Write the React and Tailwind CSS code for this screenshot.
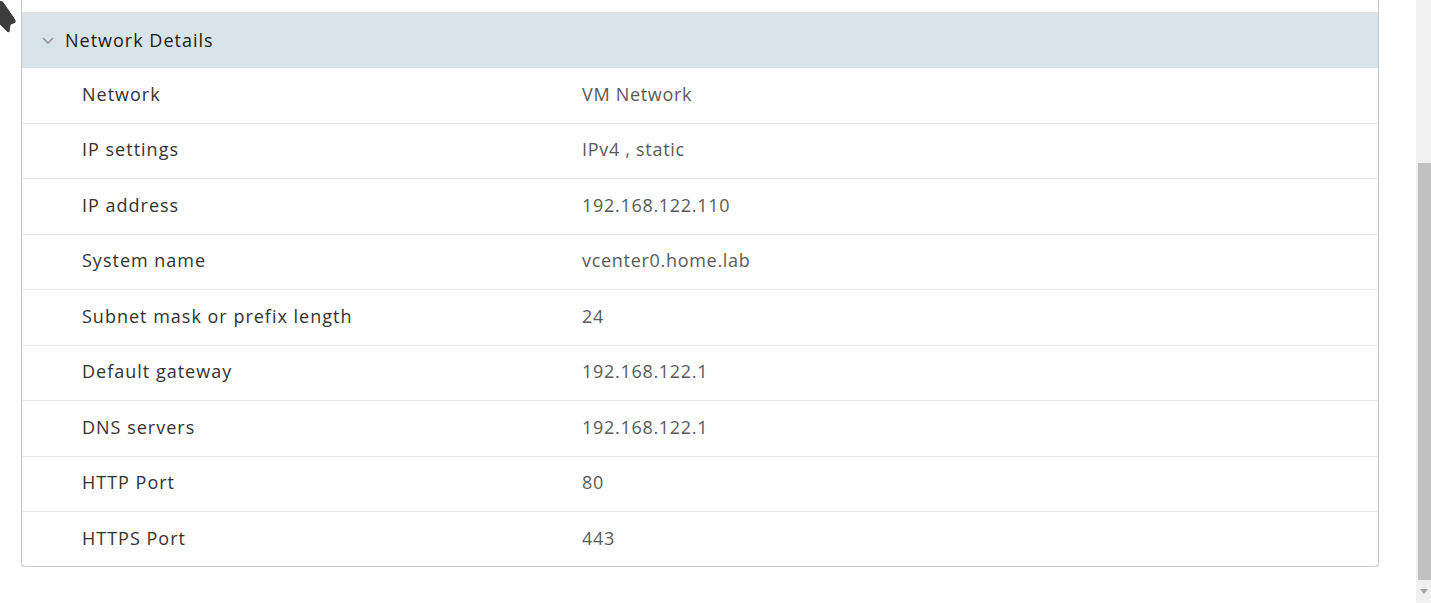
import React from 'react';

const rows = [
  ['Network', 'VM Network'],
  ['IP settings', 'IPv4 , static'],
  ['IP address', '192.168.122.110'],
  ['System name', 'vcenter0.home.lab'],
  ['Subnet mask or prefix length', '24'],
  ['Default gateway', '192.168.122.1'],
  ['DNS servers', '192.168.122.1'],
  ['HTTP Port', '80'],
  ['HTTPS Port', '443'],
];

function Cursor() {
  return (
    <svg className="absolute left-0 top-0" width="20" height="36" viewBox="0 0 20 36">
      <path d="M-1 0 L3 1 L16 20 L16 23 L11 25 L10 32 L8 33 L-1 24 Z" fill="#3d3d3d" stroke="#ffffff" strokeWidth="1" />
    </svg>
  );
}

function Row({ label, value, last }) {
  return (
    <div className={`flex items-center pb-[2px] ${last ? 'h-[54px]' : 'h-[55.5px] border-b border-[#e8e8e8]'}`}>
      <div className="w-[560px] pl-[60px] text-[#333333]">{label}</div>
      <div className="tracking-[0.7px] text-[#5a5a5a]">{value}</div>
    </div>
  );
}

export default function App() {
  return (
    <div className="relative flex h-[603px] w-[1431px] overflow-hidden bg-white font-['Open_Sans',sans-serif] text-[18px] tracking-[1px]">
      <div className="flex-1 pl-[21px] pr-[37px]">
        <div className="rounded-b-[4px] border-x-[1.5px] border-b-[1.5px] border-[#c6c6c6]">
          <div className="h-[14px] border-b-2 border-[#dfdfdf]" />
          <div className="flex h-[54px] items-center bg-[#d9e3ea] pb-[2px] pl-[19px]">
            <svg width="14" height="10" viewBox="0 0 14 10" className="mr-[10px]">
              <path d="M2 3 L7 8 L12 3" fill="none" stroke="#8a8a8a" strokeWidth="1.3" />
            </svg>
            <span className="text-[#1b1b1b]">Network Details</span>
          </div>
          {rows.map(([l, v], i) => (
            <Row key={l} label={l} value={v} last={i === rows.length - 1} />
          ))}
        </div>
      </div>
      <div className="flex w-[15px] flex-col bg-[#f0f0f0]">
        <div className="h-[163px]" />
        <div className="ml-[2px] h-[417px] bg-[#c1c1c1]" />
        <div className="flex flex-1 items-center justify-center">
          <svg width="8" height="5" viewBox="0 0 8 5">
            <path d="M0 0 L8 0 L4 5 Z" fill="#a3a3a3" />
          </svg>
        </div>
      </div>
      <Cursor />
    </div>
  );
}
